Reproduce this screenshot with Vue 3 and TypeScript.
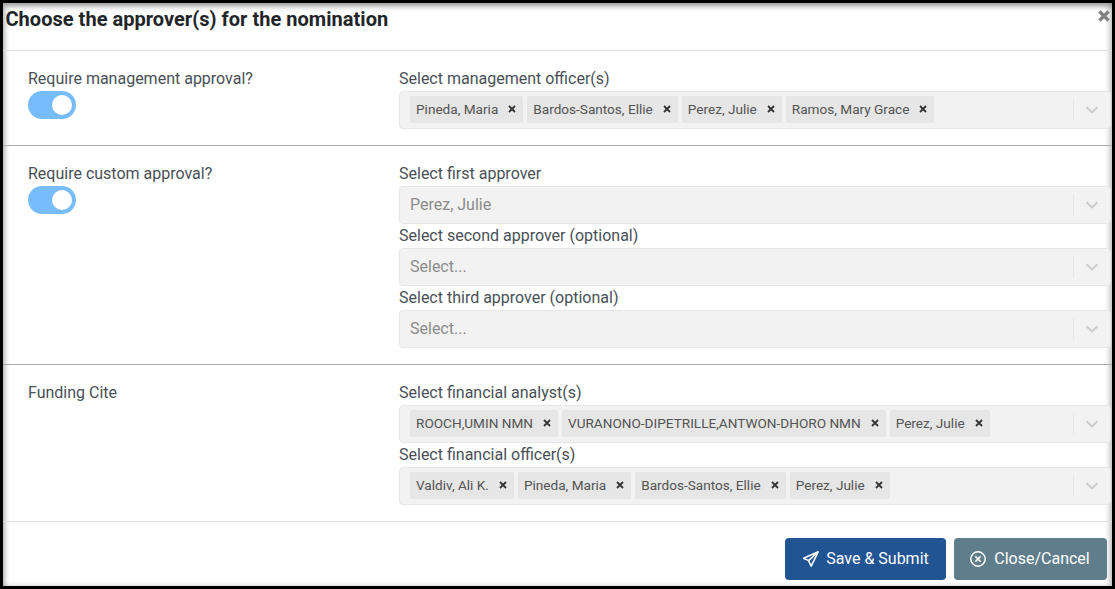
<script setup lang="ts">
interface Field {
  label: string
  tags?: string[]
  value?: string
  placeholder?: string
}
interface Section {
  title: string
  toggle: boolean
  fields: Field[]
}
const sections: Section[] = [
  {
    title: 'Require management approval?',
    toggle: true,
    fields: [
      { label: 'Select management officer(s)', tags: ['Pineda, Maria', 'Bardos-Santos, Ellie', 'Perez, Julie', 'Ramos, Mary Grace'] },
    ],
  },
  {
    title: 'Require custom approval?',
    toggle: true,
    fields: [
      { label: 'Select first approver', value: 'Perez, Julie' },
      { label: 'Select second approver (optional)', placeholder: 'Select...' },
      { label: 'Select third approver (optional)', placeholder: 'Select...' },
    ],
  },
  {
    title: 'Funding Cite',
    toggle: false,
    fields: [
      { label: 'Select financial analyst(s)', tags: ['ROOCH,UMIN NMN', 'VURANONO-DIPETRILLE,ANTWON-DHORO NMN', 'Perez, Julie'] },
      { label: 'Select financial officer(s)', tags: ['Valdiv, Ali K.', 'Pineda, Maria', 'Bardos-Santos, Ellie', 'Perez, Julie'] },
    ],
  },
]
</script>

<template>
  <div class="frame">
    <div class="modal">
      <header class="head">
        <h1 class="title">Choose the approver(s) for the nomination</h1>
        <svg class="close" viewBox="0 0 12 12" aria-label="Close"><path d="M1.5 1.5 10.5 10.5M10.5 1.5 1.5 10.5" /></svg>
      </header>
      <section v-for="s in sections" :key="s.title" class="section">
        <div class="left">
          <div class="label">{{ s.title }}</div>
          <div v-if="s.toggle" class="toggle"><span class="knob"></span></div>
        </div>
        <div class="right">
          <div v-for="f in s.fields" :key="f.label" class="field">
            <div class="label">{{ f.label }}</div>
            <div class="select">
              <div class="values">
                <span v-for="t in f.tags" :key="t" class="tag">
                  <span class="tag-text">{{ t }}</span>
                  <svg class="tag-x" viewBox="0 0 8 8"><path d="M1 1 7 7M7 1 1 7" /></svg>
                </span>
                <span v-if="f.value" class="muted">{{ f.value }}</span>
                <span v-if="f.placeholder" class="muted">{{ f.placeholder }}</span>
              </div>
              <span class="sep"></span>
              <svg class="chev" viewBox="0 0 14 8"><path d="M1.5 1.2 7 6.4 12.5 1.2" /></svg>
            </div>
          </div>
        </div>
      </section>
      <footer class="foot">
        <button class="btn primary" type="button">
          <svg class="ico" viewBox="0 0 18 18"><path d="M16.2 1.8 1.6 8.2 6.6 10.6 9.2 16.2Z M16.2 1.8 6.6 10.6" /></svg>
          <span class="btn-text">Save &amp; Submit</span>
        </button>
        <button class="btn secondary" type="button">
          <svg class="ico" viewBox="0 0 18 18"><circle cx="9" cy="9" r="7.2" /><path d="M6.4 6.4 11.6 11.6M11.6 6.4 6.4 11.6" /></svg>
          <span class="btn-text">Close/Cancel</span>
        </button>
      </footer>
    </div>
  </div>
</template>

<style>
html, body { margin: 0; background: #fff; }
</style>

<style scoped>
.frame {
  box-sizing: border-box;
  width: 1115px;
  height: 589px;
  border: 3px solid #000;
  background: #fff;
  overflow: hidden;
  font-family: Roboto, "Liberation Sans", sans-serif;
  color: #495057;
  font-size: 16px;
}
.modal {
  height: 100%;
  box-shadow: inset 2px 4px 5px rgba(0, 0, 0, 0.3), inset -3px 0 5px rgba(0, 0, 0, 0.2);
  position: relative;
}
.head {
  box-sizing: border-box;
  height: 48px;
  border-bottom: 1px solid #dee2e6;
  padding: 0 2px 0 2.5px;
  display: flex;
  justify-content: space-between;
  align-items: flex-start;
}
.title {
  margin: 4px 0 0;
  font-size: 20px;
  line-height: 24px;
  font-weight: 700;
  color: #212529;
  letter-spacing: 0.03px;
}
.close {
  width: 12px;
  height: 12px;
  margin: 7px 0 0 0;
  fill: none;
  stroke: #808080;
  stroke-width: 3.2;
}
.section {
  display: grid;
  grid-template-columns: 371px 712px;
  padding: 16px 0 16px 25px;
  border-bottom: 1px solid #aaa;
}
.section:nth-of-type(3) {
  border-bottom-color: #dee2e6;
}
.label {
  height: 24px;
  line-height: 24px;
}
.toggle {
  width: 48px;
  height: 28px;
  background: #78bdfb;
  border-radius: 14px;
  position: relative;
}
.knob {
  position: absolute;
  left: 24px;
  top: 4px;
  width: 20px;
  height: 20px;
  background: #fff;
  border-radius: 50%;
}
.select {
  box-sizing: border-box;
  height: 38px;
  background: #f2f2f2;
  border: 1px solid #e6e6e6;
  border-radius: 4px;
  display: flex;
  align-items: center;
  padding: 0 11px 0 10px;
}
.values {
  flex: 1;
  display: flex;
  gap: 4px;
  align-items: center;
  min-width: 0;
  padding-bottom: 2px;
}
.tag {
  height: 27px;
  background: #e6e6e6;
  border-radius: 2px;
  display: inline-flex;
  align-items: center;
  padding: 0 7px 0 6px;
  font-size: 13.6px;
  color: #545454;
  white-space: nowrap;
}
.tag-text {
  padding-bottom: 1px;
}
.tag-x {
  width: 8px;
  height: 8px;
  margin-left: 10px;
  fill: none;
  stroke: #333;
  stroke-width: 1.8;
}
.muted {
  color: #8c8c8c;
}
.sep {
  width: 1px;
  height: 22px;
  background: #e6e6e6;
  margin-right: 11px;
}
.chev {
  width: 14px;
  height: 8px;
  fill: none;
  stroke: #cccccc;
  stroke-width: 2;
}
.foot {
  display: flex;
  justify-content: flex-end;
  gap: 8px;
  padding: 16px 5px 0 0;
}
.btn {
  box-sizing: border-box;
  height: 42px;
  border: none;
  border-radius: 4px;
  color: #fff;
  font-family: inherit;
  font-size: 16px;
  display: inline-flex;
  align-items: center;
  justify-content: center;
  gap: 6px;
}
.btn-text {
  padding-bottom: 2px;
}
.primary { width: 161px; background: #215493; }
.secondary { width: 153px; background: #607d8b; padding: 0 2px 0 0; gap: 7px; }
.ico {
  width: 18px;
  height: 18px;
  fill: none;
  stroke: #fff;
  stroke-width: 1.5;
  stroke-linejoin: round;
}
</style>
